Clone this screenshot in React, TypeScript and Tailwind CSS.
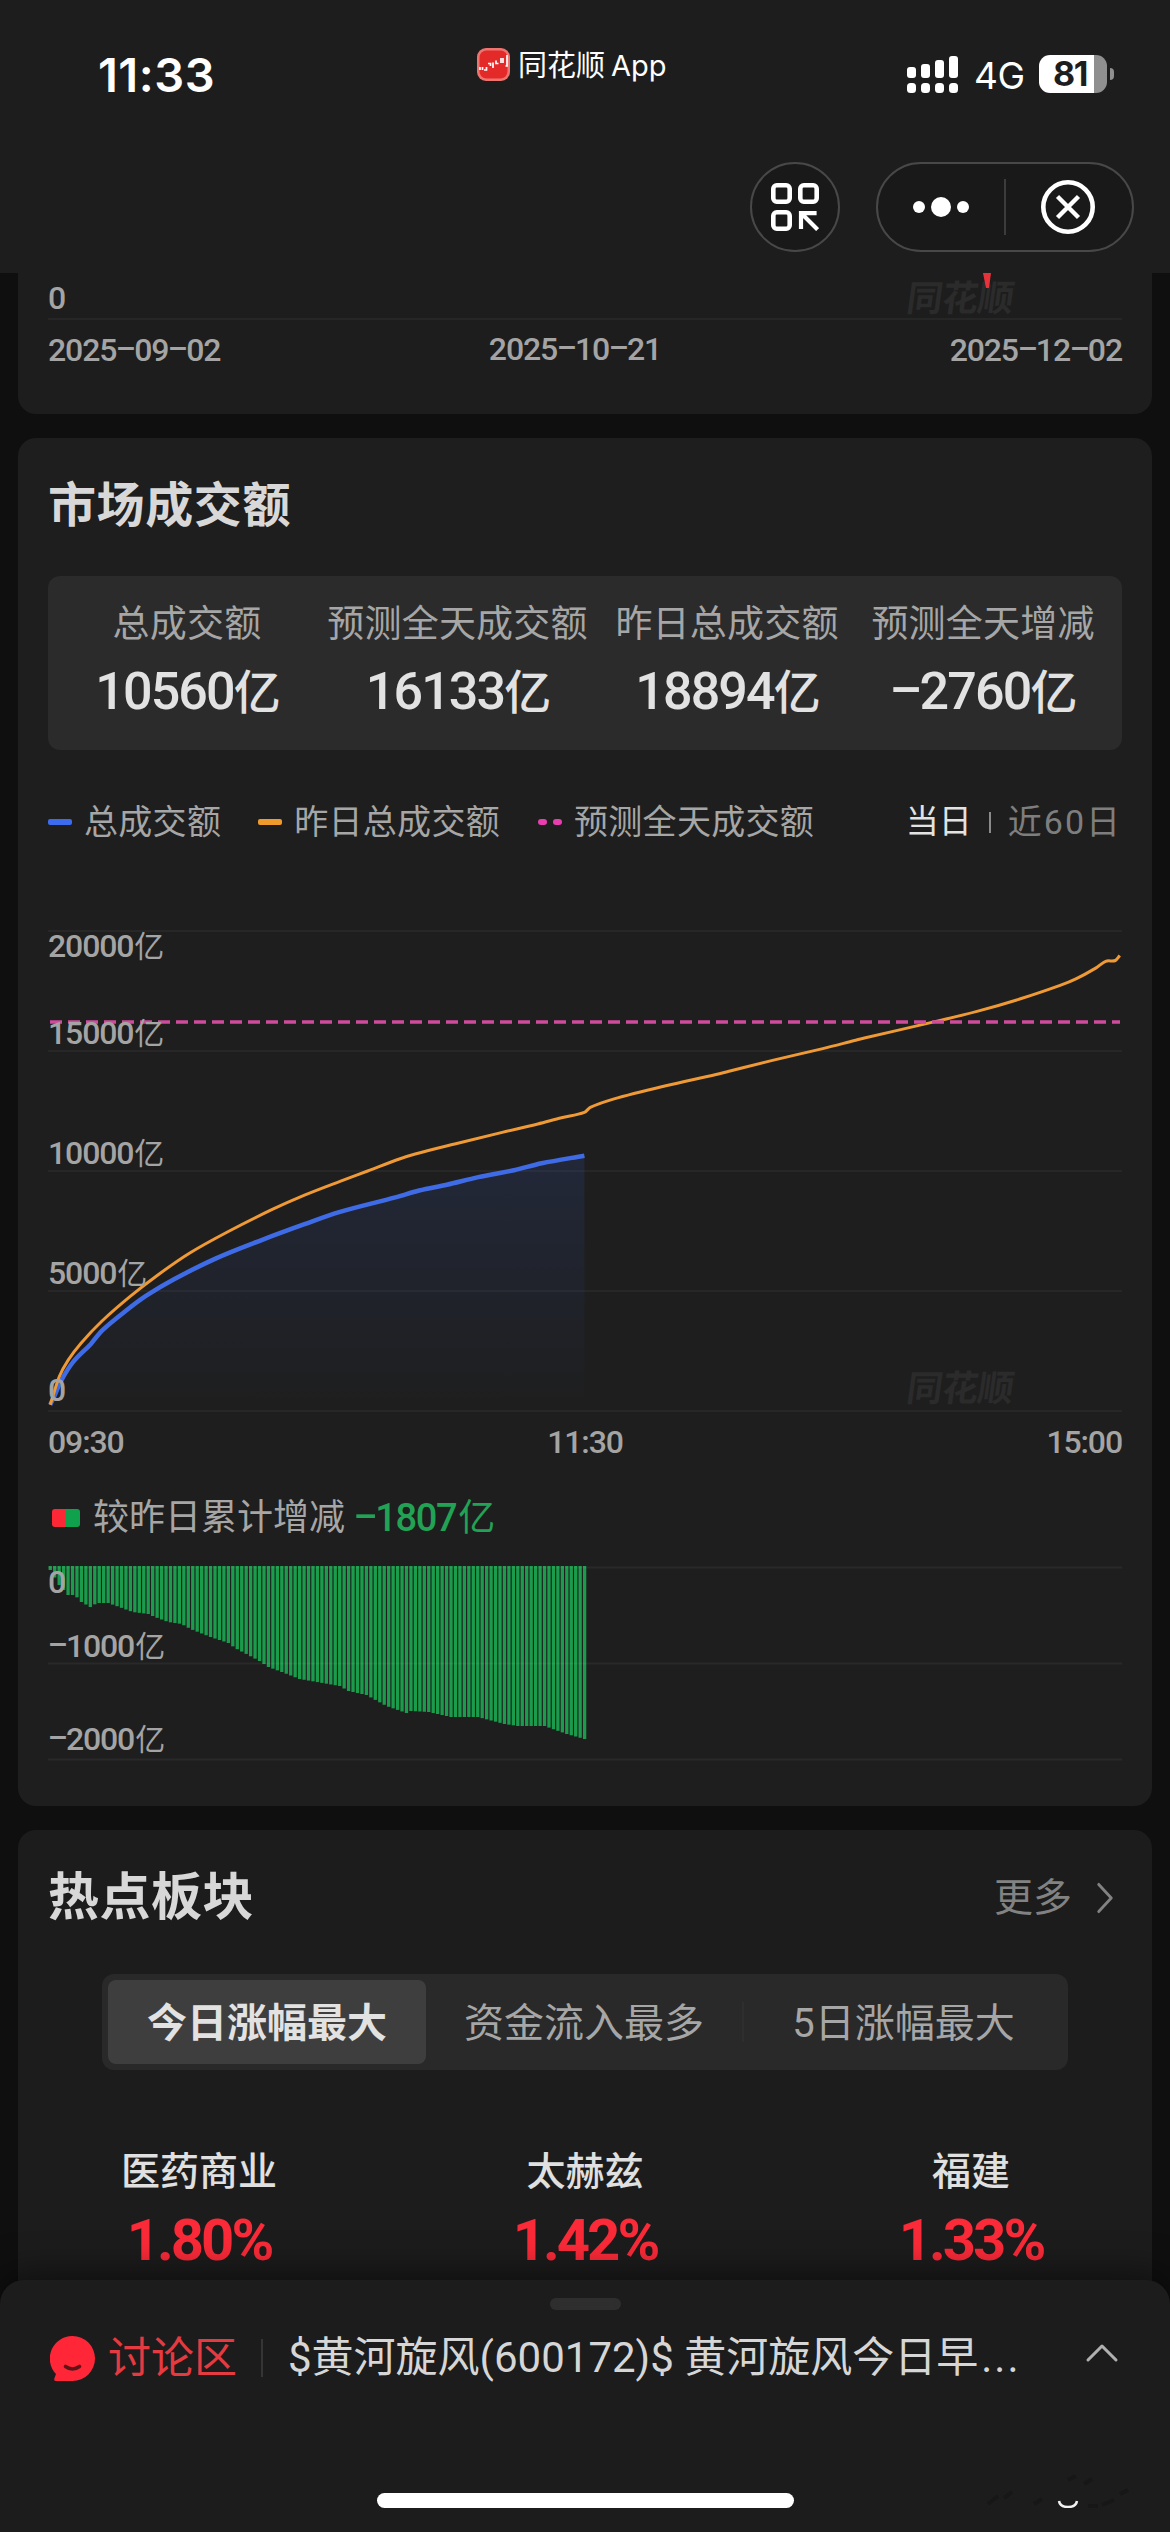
import clsx from "clsx";
import { ChevronRight, ChevronUp } from "lucide-react";

const STATS = [
	{ label: "总成交额", value: "10560" },
	{ label: "预测全天成交额", value: "16133" },
	{ label: "昨日总成交额", value: "18894" },
	{ label: "预测全天增减", value: "-2760" },
];

const SECTORS = [
	{ name: "医药商业", change: "1.80%" },
	{ name: "太赫兹", change: "1.42%" },
	{ name: "福建", change: "1.33%" },
];

const YESTERDAY =
	"2.2,474.8 11.3,446.5 20,430.4 33,413.2 54,391 82.5,366.1 110.2,344.7 141.8,323 179.4,302 224.8,279.2 256.5,265.1 292,251.3 319.7,241 351.4,229 367.2,224 406.7,214 454.2,202.4 489.8,194 513.5,187.8 536.4,182.4 542.3,177.4 565.3,169.1 616.7,156 668,144.5 680,141.5 723.4,130.6 774.8,118.6 806.5,110.5 816.4,108 881.6,92.9 929,81.4 972.5,68.8 1012.1,55.4 1027.9,48.9 1047.7,38.1 1057.6,31.3 1067.4,30.5 1071.8,25.6";

const TODAY =
	"2.2,474.8 7.4,463.7 13.3,450.3 25.2,431.9 42.9,413.9 54,400.6 78.5,380.3 98.3,365.7 126,349.3 167.5,328.6 213,310.3 256.5,294.2 292,281.9 347.4,267.4 371.1,260.5 398.8,254.7 430.4,247.1 466,240.2 493.7,233.3 536.4,225.7";

// [minute, bar length in px] key points of the cumulative difference
const DIFF: [number, number][] = [
	[0, 4],
	[2, 19],
	[4, 29],
	[5.5, 29],
	[7, 36],
	[9, 41],
	[10.5, 37],
	[13, 37],
	[15.5, 41],
	[18.5, 46],
	[22, 48],
	[23.5, 51],
	[26.5, 56],
	[29.5, 58],
	[31.5, 63],
	[36, 71],
	[40, 77],
	[41.5, 82],
	[47, 95],
	[49, 101],
	[52, 106],
	[56, 113],
	[65, 120],
	[67, 125],
	[71, 129],
	[75.5, 140],
	[80, 147],
	[81, 145],
	[85, 146],
	[90, 151],
	[96, 151],
	[102, 158],
	[105, 160],
	[111, 160],
	[116, 168],
	[120, 173],
];

function diffAt(minute: number) {
	const next = DIFF.findIndex(([m]) => m >= minute);
	if (next <= 0) return DIFF[0][1];
	const [m0, v0] = DIFF[next - 1];
	const [m1, v1] = DIFF[next];
	return v0 + ((v1 - v0) * (minute - m0)) / (m1 - m0);
}

// Soft curve through "x,y x,y ..." points
function smooth(points: string) {
	const p = points.split(" ").map((pair) => pair.split(",").map(Number));
	let d = `M${p[0][0]} ${p[0][1]}`;
	for (let i = 0; i < p.length - 1; i++) {
		const [ax, ay] = p[i];
		const [bx, by] = p[i + 1];
		const [px, py] = p[i - 1] ?? p[i];
		const [nx, ny] = p[i + 2] ?? p[i + 1];
		const step = bx - ax;
		const slopeA = (by - py) / (bx - px);
		const slopeB = (ny - ay) / (nx - ax);
		d += `C${ax + step / 3} ${ay + (slopeA * step) / 3} ${bx - step / 3} ${by - (slopeB * step) / 3} ${bx} ${by}`;
	}
	return d;
}

export default function App() {
	return (
		<div className="relative flex h-[2532px] w-[1170px] flex-col overflow-hidden bg-[#0f0f0f] font-['Roboto','Noto_Sans_CJK_SC',sans-serif] text-[#a6a6a6]">
			<Header />
			<main className="flex flex-col gap-6 px-[18px]">
				<HistoryCard />
				<TurnoverCard />
				<SectorCard />
			</main>
			<DiscussionSheet />
		</div>
	);
}

function Header() {
	return (
		<header className="h-[273px] shrink-0 bg-[#1d1d1d]">
			<div className="flex h-[150px] pt-[42px]">
				<div className="ml-[98px] mt-[10px] w-[379px] font-['Inter'] text-[47px] font-semibold leading-[46px] tracking-[0.5px] text-white">
					11:33
				</div>
				<div className="flex h-[48px] w-[430px] items-center gap-[8px]">
					<AppLogo />
					<div className="flex items-center whitespace-nowrap text-white">
						<span className="text-[29px] leading-[48px]">同花顺</span>
						<span className="ml-[6px] font-['Inter'] text-[29px] leading-[48px]">
							App
						</span>
					</div>
				</div>
				<div className="mt-[13px] flex h-[38px] items-center">
					<SignalIcon />
					<span className="ml-[16px] mt-[4px] w-[65px] font-['Inter'] text-[37px] leading-[38px] tracking-[-0.5px] text-white">
						4G
					</span>
					<div className="h-[38px] w-[68px] rounded-[11px] bg-gradient-to-r from-white from-[81%] to-[#8f8f8f] to-[81%] pl-[14px] font-['Inter'] text-[34px] font-bold leading-[38px] tracking-[-1.5px] text-[#1d1d1d]">
						81
					</div>
					<div className="ml-[3px] h-[12px] w-[4px] rounded-r-full bg-[#8f8f8f]" />
				</div>
			</div>
			<div className="mt-[12px] flex justify-end gap-[36px] pr-[36px]">
				<button
					type="button"
					className="flex h-[90px] w-[90px] items-center justify-center rounded-full border-2 border-[#484848] bg-[#191919]"
				>
					<svg viewBox="0 0 48 48" className="h-12 w-12" fill="none" stroke="#fff">
						<g strokeWidth="4.6">
							<rect x="2.3" y="2.3" width="16.4" height="16.4" rx="3.5" />
							<rect x="29.3" y="2.3" width="16.4" height="16.4" rx="3.5" />
							<rect x="2.3" y="29.3" width="16.4" height="16.4" rx="3.5" />
						</g>
						<path d="M30 46V30.2h15.6M31 31l15.6 15.6" strokeWidth="4.2" />
					</svg>
				</button>
				<div className="flex h-[90px] w-[258px] items-center rounded-full border-2 border-[#484848] bg-[#191919]">
					<div className="flex w-[126px] items-center justify-center gap-[6px]">
						<span className="h-3 w-3 rounded-full bg-white" />
						<span className="h-5 w-5 rounded-full bg-white" />
						<span className="h-3 w-3 rounded-full bg-white" />
					</div>
					<span className="h-[56px] w-[2px] bg-[#3c3c3c]" />
					<svg
						viewBox="0 0 54 54"
						className="ml-[35px] h-[54px] w-[54px]"
						fill="none"
						stroke="#fff"
					>
						<circle cx="27" cy="27" r="24.7" strokeWidth="4.6" />
						<path d="M16.5 16.5l21 21M37.5 16.5l-21 21" strokeWidth="4.4" />
					</svg>
				</div>
			</div>
		</header>
	);
}

function AppLogo() {
	return (
		<svg viewBox="0 0 33 33" className="-mt-[3px] h-[33px] w-[33px]">
			<rect width="33" height="33" rx="9" fill="#ee7470" />
			<rect x="2.5" y="2.5" width="28" height="28" rx="7" fill="#e32a28" />
			<path
				d="M3 22v-3M5.500 22v-3M7 22h2.500v-3M11 15.500h2.500v2.500M16 14.500v5.500M19 12.500v3h2.500M24 10v5M26 10v5M30 7v11h-1.500"
				fill="none"
				stroke="#fff"
				strokeWidth="1.700"
			/>
		</svg>
	);
}

function SignalIcon() {
	const heights = [11, 14, 18, 22];
	return (
		<svg viewBox="0 0 51 37" className="h-[37px] w-[51px]" fill="#fff">
			{heights.map((h, i) => (
				<g key={h}>
					<rect x={i * 14} y={22 - h} width="9" height={h} rx="3" />
					<rect x={i * 14} y="27" width="9" height="10" rx="3.500" />
				</g>
			))}
		</svg>
	);
}

// The hyphen is stretched to the width of a digit
function Num({ children }: { children: string }) {
	return (
		<span className="tracking-[-0.035em]">
			{children.split(/(-)/).map((part, i) =>
				part === "-" ? (
					<span
						key={i}
						className="inline-block w-[0.56em] -translate-y-[0.08em] scale-x-[1.9] text-center"
					>
						-
					</span>
				) : (
					part
				),
			)}
		</span>
	);
}

function AxisLabel({
	value,
	unit,
	className,
}: {
	value: string;
	unit?: string;
	className: string;
}) {
	return (
		<div
			className={clsx(
				"absolute left-0 whitespace-nowrap text-[32px] leading-[32px] text-[#a4a4a4]",
				className,
			)}
		>
			<span className="font-medium">
				<Num>{value}</Num>
			</span>
			{unit && <span className="ml-[1px] text-[30px]">{unit}</span>}
		</div>
	);
}

function Watermark({ className }: { className: string }) {
	return (
		<div
			className={clsx(
				"absolute -skew-x-8 text-[36px] font-bold leading-[36px] tracking-[-0.5px] text-[#2b2b2b]",
				className,
			)}
		>
			同花顺
		</div>
	);
}

function HistoryCard() {
	return (
		<section className="h-[141px] shrink-0 rounded-b-[18px] bg-[#1d1d1d] px-[30px]">
			<div className="relative h-[47px] border-b-2 border-[#262626]">
				<Watermark className="right-[108px] top-[8px]" />
				<svg viewBox="0 0 8 15" className="absolute left-[935px] top-0 h-[15px] w-2">
					<path d="M0 0h8l-2 15H3z" fill="#e8323a" />
				</svg>
				<AxisLabel value="0" className="top-[9px]" />
			</div>
			<div className="flex justify-between pt-[13px] text-[32px] font-medium leading-[34px] text-[#a4a4a4]">
				<Num>2025-09-02</Num>
				<span className="-mt-px mr-[20px]">
					<Num>2025-10-21</Num>
				</span>
				<Num>2025-12-02</Num>
			</div>
		</section>
	);
}

function TurnoverCard() {
	return (
		<section className="h-[1368px] shrink-0 rounded-[18px] bg-[#1e1e1e] px-[30px] pt-[38px]">
			<h2 className="h-[100px] text-[48px] font-bold leading-[60px] tracking-[0.6px] text-[#d8d8d8]">
				市场成交额
			</h2>

			<div className="grid h-[174px] grid-cols-[270px_271px_268px_244px] rounded-xl bg-[#2b2b2b] pl-1 pt-[27px]">
				{STATS.map((stat) => (
					<div key={stat.label} className="text-center">
						<div className="whitespace-nowrap text-[37px] leading-[44px] tracking-[0.2px]">
							{stat.label}
						</div>
						<div className="ml-[2px] mt-[15px] whitespace-nowrap text-[52px] font-medium leading-[60px] text-[#e2e2e2]">
							<Num>{stat.value}</Num>
							<span className="text-[47px]">亿</span>
						</div>
					</div>
				))}
			</div>

			<div className="mt-[50px] flex h-[44px] items-center text-[34px] leading-[44px]">
				<span className="mr-3 h-[6px] w-6 rounded-[2px] bg-[#3d6bee]" />
				<span className="tracking-[0.3px]">总成交额</span>
				<span className="ml-[37px] mr-3 h-[6px] w-6 rounded-[2px] bg-[#f09a2c]" />
				<span className="tracking-[0.3px]">昨日总成交额</span>
				<span className="ml-[38px] h-[6px] w-[9px] rounded-[3px] bg-[#e83eb0]" />
				<span className="ml-[6px] mr-3 h-[6px] w-[9px] rounded-[3px] bg-[#e83eb0]" />
				<span className="tracking-[0.3px]">预测全天成交额</span>
				<span className="ml-auto text-[33px] text-[#e2e2e2]">当日</span>
				<span className="mx-[17px] h-[21px] w-[2px] bg-[#8a8a8a]" />
				<span className="text-[34px] tracking-[2px] text-[#7e7e7e]">近60日</span>
			</div>

			<TurnoverChart />

			<div className="mt-[37px] flex h-[44px] items-center">
				<span className="ml-1 h-[18px] w-7 rounded-[3px] bg-gradient-to-r from-[#fd2736] from-50% to-[#0fa14b] to-50%" />
				<span className="ml-[13px] text-[36px] leading-[44px]">较昨日累计增减</span>
				<span className="ml-[9px] text-[38px] font-medium leading-[44px] text-[#22a255]">
					<Num>-1807</Num>
					<span className="ml-[2px] text-[37px] font-normal">亿</span>
				</span>
			</div>

			<DiffChart />
		</section>
	);
}

function TurnoverChart() {
	const today = smooth(TODAY);
	return (
		<div className="mt-[86px]">
			<div className="relative h-[482px] w-[1074px]">
				<svg viewBox="0 0 1074 482" className="h-[482px] w-[1074px]" fill="none">
					<defs>
						<linearGradient id="today" x1="0" y1="225" x2="0" y2="480" gradientUnits="userSpaceOnUse">
							<stop offset="0" stopColor="#3d6bee" stopOpacity="0.13" />
							<stop offset="1" stopColor="#3d6bee" stopOpacity="0" />
						</linearGradient>
					</defs>
					{[0, 120, 240, 360, 480].map((y) => (
						<path key={y} d={`M0 ${y + 1}h1074`} stroke="#272727" strokeWidth="2" />
					))}
					<path d={`${today}V480H2z`} fill="url(#today)" />
					<path d={today} stroke="#3f6ce6" strokeWidth="4.500" />
					<path d={smooth(YESTERDAY)} stroke="#ef9a36" strokeWidth="3" />
					<path d="M2 92h1070" stroke="#cf4b9c" strokeWidth="3.600" strokeDasharray="12 6" />
				</svg>
				<Watermark className="right-[108px] top-[441px]" />
				<AxisLabel value="20000" unit="亿" className="top-0" />
				<AxisLabel value="15000" unit="亿" className="top-[87px]" />
				<AxisLabel value="10000" unit="亿" className="top-[207px]" />
				<AxisLabel value="5000" unit="亿" className="top-[327px]" />
				<AxisLabel value="0" className="top-[444px]" />
			</div>
			<div className="mt-[13px] flex justify-between text-[32px] font-medium leading-[34px] text-[#a4a4a4]">
				<Num>09:30</Num>
				<Num>11:30</Num>
				<Num>15:00</Num>
			</div>
		</div>
	);
}

function DiffChart() {
	return (
		<div className="relative mt-[26px] h-[196px] w-[1074px]">
			<svg viewBox="0 0 1074 196" className="h-[196px] w-[1074px]">
				{Array.from({ length: 121 }, (_, i) => (
					<rect
						key={i}
						x={0.6 + i * 4.453}
						y="0"
						width="3.300"
						height={diffAt(i)}
						fill="#1b9c4c"
					/>
				))}
				{[1, 97, 193].map((y) => (
					<path key={y} d={`M0 ${y + 0.5}h1074`} stroke="#fff" strokeOpacity="0.05" strokeWidth="2" />
				))}
			</svg>
			<AxisLabel value="0" className="top-0" />
			<AxisLabel value="-1000" unit="亿" className="top-[64px]" />
			<AxisLabel value="-2000" unit="亿" className="top-[157px]" />
		</div>
	);
}

function SectorCard() {
	return (
		<section className="h-[500px] shrink-0 rounded-t-[18px] bg-[#1c1c1c] px-[30px] pt-[36px]">
			<div className="flex h-[64px] items-center justify-between">
				<h2 className="text-[51px] font-bold leading-[64px] tracking-[0.5px] text-[#d8d8d8]">
					热点板块
				</h2>
				<div className="flex items-center text-[39px] leading-[64px] text-[#828282]">
					更多
					<ChevronRight
						className="-mr-[8px] ml-[8px] h-[54px] w-[50px]"
						strokeWidth={1.4}
						preserveAspectRatio="none"
					/>
				</div>
			</div>

			<div className="mx-[54px] mt-[44px] flex h-[96px] items-center rounded-xl bg-[#292929] text-[40px] leading-[88px]">
				<div className="ml-[6px] h-[84px] w-[318px] rounded-lg bg-[#3e3e3e] text-center font-bold text-[#e2e2e2]">
					今日涨幅最大
				</div>
				<div className="h-[84px] w-[316px] text-center">资金流入最多</div>
				<span className="h-[40px] w-[2px] bg-[#2e2e2e]" />
				<div className="h-[84px] w-[319px] text-center">5日涨幅最大</div>
			</div>

			<div className="mt-[76px] flex justify-between px-[1px]">
				{SECTORS.map((sector) => (
					<div key={sector.name} className="w-[300px] text-center">
						<div className="text-[39px] font-medium leading-[52px] text-[#e0e0e0]">
							{sector.name}
						</div>
						<div className="mt-[12px] text-[58px] font-bold leading-[60px] tracking-[-3px] text-[#fb2a38]">
							{sector.change}
						</div>
					</div>
				))}
			</div>
		</section>
	);
}

function DiscussionSheet() {
	return (
		<div className="absolute inset-x-0 bottom-0 flex h-[252px] flex-col rounded-t-[24px] bg-[#1c1c1c] shadow-[0_-6px_36px_rgba(0,0,0,0.5)]">
			<span className="mx-auto mt-[18px] h-3 w-[71px] rounded-full bg-[#2e2e2e]" />
			<div className="mt-[18px] flex h-[60px] items-center pl-[50px] pr-[40px]">
				<svg viewBox="0 0 45 45" className="h-[45px] w-[45px]">
					<path
						d="M22.500 0A22.500 22.500 0 0 1 22.500 45H6Q3.500 45 4.500 42L6 38A22.500 22.500 0 0 1 22.500 0z"
						fill="#ff2638"
					/>
					<path
						d="M15.500 30.500q7 5 14 0"
						fill="none"
						stroke="#5e1319"
						strokeWidth="3.600"
						strokeLinecap="round"
					/>
				</svg>
				<span className="ml-[13px] text-[43px] leading-[60px] text-[#e53a40]">讨论区</span>
				<span className="ml-[24px] h-[38px] w-[2px] bg-[#353535]" />
				<span className="ml-[25px] whitespace-nowrap text-[42px] leading-[60px] text-[#d6d6d6]">
					$黄河旋风(600172)$ 黄河旋风今日早
					<span className="ml-[3px] tracking-[2px]">...</span>
				</span>
				<ChevronUp
					className="-mt-[10px] ml-auto h-[56px] w-[56px] text-[#b0b0b0]"
					strokeWidth={1.3}
				/>
			</div>
			<span className="mx-auto mt-[105px] h-[15px] w-[417px] rounded-full bg-white" />
			<svg viewBox="0 0 160 34" className="absolute bottom-[24px] right-[26px] h-[34px] w-[160px]" fill="none">
				<path
					d="M4 30l10-8M20 24l8-6M50 30l8-5M84 6l8-4M100 10l8-5M104 32h10M118 31l12-5M136 20l8-4"
					stroke="#171717"
					strokeWidth="4"
				/>
				<path d="M75 27q1 6 9 6t9-6" stroke="#f2f2f2" strokeWidth="2.500" />
			</svg>
		</div>
	);
}
